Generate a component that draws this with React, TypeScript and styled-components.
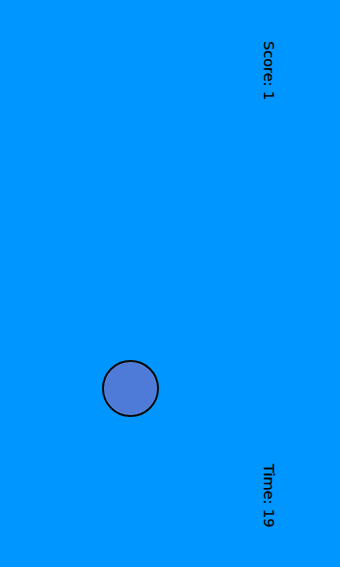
import styled, { createGlobalStyle } from "styled-components";

const GlobalStyle = createGlobalStyle`
    html, body {
        margin: 0;
        padding: 0;
        height: 100%;
        overflow: hidden;
    }
    #root {
        height: 100%;
    }
`;

const Field = styled.div`
    position: relative;
    width: 100%;
    height: 100vh;
    background-color: #0096ff;
    box-sizing: border-box;
    padding: 41px 63px 40px 0;
    display: flex;
    flex-direction: column;
    justify-content: space-between;
    align-items: flex-end;
    font-family: "DejaVu Sans", sans-serif;
    font-size: 14.5px;
    color: #000;
`;

const Stat = styled.div`
    writing-mode: vertical-rl;
    line-height: 16px;
    white-space: nowrap;
    -webkit-text-stroke: 0.2px #000;
`;

const Ball = styled.div<{ $x: number; $y: number; $size: number }>`
    position: absolute;
    left: ${(p) => p.$x}px;
    top: ${(p) => p.$y}px;
    width: ${(p) => p.$size}px;
    height: ${(p) => p.$size}px;
    box-sizing: border-box;
    border: 2.5px solid #0a0a0a;
    border-radius: 50%;
    background-color: #4e7ad8;
    box-shadow: inset 0 0 0 1px #5a87e2;
`;

export default function App() {
    const score = 1;
    const time = 19;

    return (
        <>
            <GlobalStyle />
            <Field>
                <Stat>Score: {score}</Stat>
                <Stat>Time: {time}</Stat>
                <Ball $x={102} $y={360} $size={57} />
            </Field>
        </>
    );
}
